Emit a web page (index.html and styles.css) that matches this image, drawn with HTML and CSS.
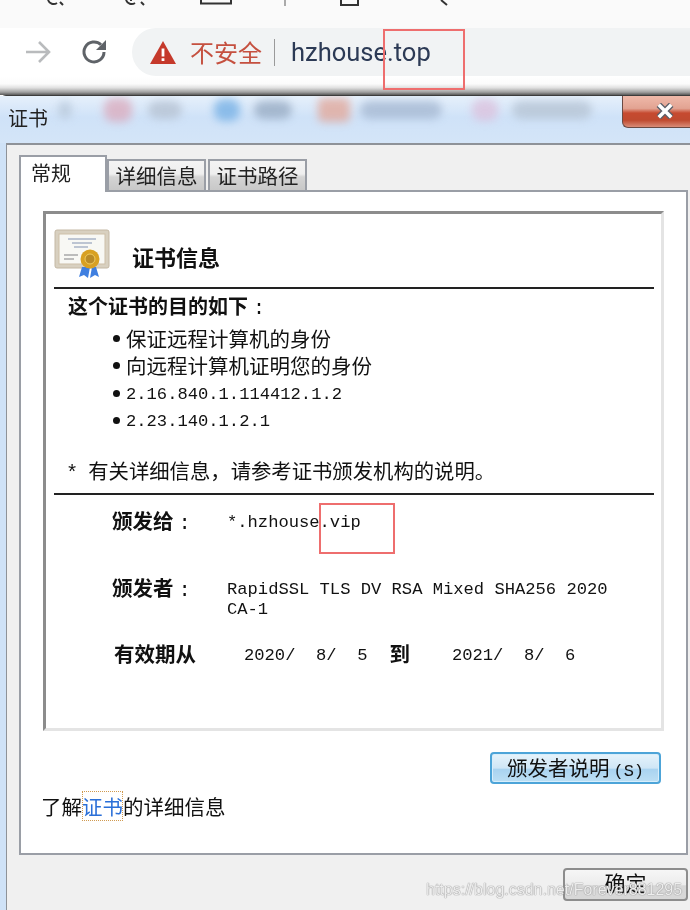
FILE: index.html
```html
<!DOCTYPE html>
<html lang="zh">
<head>
<meta charset="utf-8">
<title>证书</title>
<link rel="stylesheet" href="styles.css">
</head>
<body>
<div class="page">
  <div class="top-strip">
    <svg class="strip-icons" width="690" height="28" viewBox="0 0 690 28" fill="none" stroke="#333" stroke-width="2">
      <path d="M48 0a6 6 0 0 0 9 3M60 2l3 3"/>
      <path d="M126 0a6 6 0 0 0 9 3M141 2l3 3M130 0h2"/>
      <path d="M201 0v3.5h30V0"/>
      <path d="M285 0v6" stroke="#aaa"/>
      <path d="M341 0v5h17V0"/>
      <path d="M441 0l6 5"/>
    </svg>
  </div>
  <div class="toolbar">
    <svg class="nav-forward" width="26" height="26" viewBox="0 0 26 26" fill="none" stroke="#b9bbbd" stroke-width="2.6">
      <path d="M1 13h22M14 3l10 10-10 10"/>
    </svg>
    <svg class="nav-reload" width="28" height="28" viewBox="0 0 28 28" fill="none">
      <path d="M23 14a10 10 0 1 1-3-7.2" stroke="#5f6368" stroke-width="3"/>
      <path d="M25 2v10h-10z" fill="#5f6368"/>
    </svg>
    <div class="omnibox">
      <svg class="warn" width="26" height="23" viewBox="0 0 26 23">
        <path d="M13 0l13 23H0z" fill="#c5392b"/>
        <path d="M11.6 7.500h2.800v8h-2.800zM11.600 17.300h2.800v2.800h-2.800z" fill="#fff"/>
      </svg>
      <span class="insecure">不安全</span>
      <span class="omni-sep"></span>
      <span class="url">hzhouse.top</span>
    </div>
  </div>
  <div class="toolbar-shadow"></div>
  <div class="window">
    <div class="titlebar">
      <div class="blurred-tabs">
        <i class="blob b-gray1"></i><i class="blob b-pink"></i><i class="blob b-gray2"></i>
        <i class="blob b-blue"></i><i class="blob b-gray3"></i><i class="blob b-red"></i>
        <i class="blob b-gray4"></i><i class="blob b-pink2"></i><i class="blob b-gray5"></i>
      </div>
      <span class="title-text">证书</span>
      <div class="close-btn">
        <svg width="20" height="16" viewBox="0 0 22 18">
          <path d="M4 2l14 14M18 2L4 16" stroke="#5b5f68" stroke-width="7" fill="none"/>
          <path d="M4 2l14 14M18 2L4 16" stroke="#fff" stroke-width="4" fill="none"/>
        </svg>
      </div>
    </div>
    <div class="client">
      <div class="tabs">
        <div class="tab tab-active">常规</div>
        <div class="tab">详细信息</div>
        <div class="tab">证书路径</div>
      </div>
      <div class="panel">
        <div class="info-box">
          <div class="info-head">
            <svg class="cert-icon" width="56" height="50" viewBox="0 0 56 50">
              <rect x="1" y="1" width="54" height="38" rx="2" fill="#d8d0c0" stroke="#c4b8a4"/>
              <rect x="5" y="5" width="46" height="30" fill="#f8f8f4" stroke="#cdbfa8"/>
              <path d="M14 10h28M18 14h20M20 18h14" stroke="#a9b4c6" stroke-width="1.500"/>
              <path d="M10 26h14M10 30h10" stroke="#a8a8a8" stroke-width="1.500"/>
              <path d="M28 38l-3 10 5-2 4 3 2-11zM38 38l-2 11 5-3 4 2-3-10z" fill="#3f7fe0"/>
              <circle cx="36" cy="30" r="9.500" fill="#d8a022"/>
              <circle cx="36" cy="30" r="5" fill="#b98a26" stroke="#f0cc60"/>
            </svg>
            <h1 class="info-title">证书信息</h1>
          </div>
          <div class="rule"></div>
          <h2 class="purpose-title">这个证书的目的如下<span class="colon">:</span></h2>
          <ul class="purpose-list">
            <li>保证远程计算机的身份</li>
            <li>向远程计算机证明您的身份</li>
            <li class="mono">2.16.840.1.114412.1.2</li>
            <li class="mono">2.23.140.1.2.1</li>
          </ul>
          <p class="note"><span class="star">*</span>有关详细信息，请参考证书颁发机构的说明。</p>
          <div class="rule"></div>
          <div class="field field-to">
            <span class="label">颁发给<span class="colon">:</span></span>
            <span class="value">*.hzhouse.vip</span>
          </div>
          <div class="field field-by">
            <span class="label">颁发者<span class="colon">:</span></span>
            <span class="value">RapidSSL TLS DV RSA Mixed SHA256 2020<br>CA-1</span>
          </div>
          <div class="validity">
            <span class="label">有效期从</span>
            <span class="date date-from">2020/  8/  5</span>
            <span class="label to">到</span>
            <span class="date date-to">2021/  8/  6</span>
          </div>
        </div>
        <div class="actions">
          <button class="issuer-btn">颁发者说明<span class="mnemonic">(S)</span></button>
        </div>
        <p class="learn">了解<a class="learn-link">证书</a>的详细信息</p>
      </div>
      <div class="footer">
        <button class="ok-btn">确定</button>
      </div>
    </div>
  </div>
  <div class="mark mark-top"></div>
  <div class="mark mark-vip"></div>
  <div class="watermark">https://blog.csdn.net/Forever881295</div>
</div>
</body>
</html>
```
FILE: styles.css
```css
* { box-sizing: border-box; }
html, body { margin: 0; padding: 0; }
body {
  width: 690px;
  height: 910px;
  overflow: hidden;
  background: #fff;
  font-family: "Noto Sans CJK SC", "Liberation Sans", sans-serif;
  color: #111;
}
.page {
  position: relative;
  width: 690px;
  height: 910px;
  overflow: hidden;
  filter: blur(0.45px);
}
.top-strip { height: 28px; background: #fafafa; }
.strip-icons { display: block; }
.toolbar {
  height: 48px;
  display: flex;
  align-items: center;
  background: #fff;
  padding-left: 25px;
}
.nav-forward { margin-right: 30px; }
.nav-reload { margin-right: 23px; }
.omnibox {
  flex: 1;
  height: 48px;
  display: flex;
  align-items: center;
  background: #f1f3f4;
  border-radius: 24px 0 0 24px;
  padding-left: 18px;
}
.warn { margin-right: 14px; }
.insecure { font-size: 24px; color: #c5503f; width: 72px; white-space: nowrap; line-height: 48px; }
.omni-sep { width: 1px; height: 27px; background: #9a9a9a; margin: 0 16px 0 12px; }
.url { font-family: "Roboto", "Liberation Sans", sans-serif; font-size: 25.500px; color: #2c3a55; }
.toolbar-shadow {
  height: 19px;
  background: linear-gradient(#fff 0, #fbfbfb 42%, #e0e0e0 62%, #a0a0a0 85%, #5a5a5a 100%);
}
.window { height: 815px; display: flex; flex-direction: column; background: #cfe2f7; border-top: 1px solid #3c3c3c; border-top-left-radius: 6px; }
.titlebar {
  position: relative;
  height: 47px;
  flex: none;
  background: linear-gradient(#e6f0fb 0, #cfe2f8 45%, #d4e5f8 100%);
  padding: 7px 0 0 8px;
  overflow: hidden;
}
.title-text { position: relative; display: block; font-size: 20px; line-height: 30px; color: #222; }
.blurred-tabs {
  position: absolute;
  left: 58px;
  top: 2px;
  display: flex;
  align-items: center;
  height: 24px;
  filter: blur(4px);
  opacity: 0.75;
}
.blob { display: block; height: 18px; border-radius: 9px; flex: none; }
.b-gray1 { width: 14px; background: #b8c8da; margin-right: 32px; }
.b-pink { width: 28px; height: 24px; background: #dba9bb; margin-right: 16px; }
.b-gray2 { width: 34px; background: #b4c0d0; margin-right: 32px; }
.b-blue { width: 26px; height: 22px; background: #72aee4; margin-right: 14px; }
.b-gray3 { width: 38px; background: #94a8c0; margin-right: 26px; }
.b-red { width: 32px; height: 24px; border-radius: 5px; background: #e3a596; margin-right: 10px; }
.b-gray4 { width: 82px; background: #a3b6d0; margin-right: 30px; }
.b-pink2 { width: 26px; height: 22px; background: #dcc0dc; margin-right: 14px; }
.b-gray5 { width: 80px; background: #b4c2d2; }
.close-btn {
  position: absolute;
  right: 0;
  top: 0;
  width: 68px;
  height: 32px;
  display: flex;
  align-items: center;
  justify-content: center;
  padding: 0 0 2px 16px;
  border-left: 1px solid #6a4a44;
  border-bottom: 1px solid #6a4a44;
  border-bottom-left-radius: 6px;
  background: linear-gradient(#efb9aa 0, #e2a392 40%, #c64a30 55%, #bf4a30 78%, #d98c78 100%);
}
.client {
  flex: 1;
  margin-left: 6px;
  display: flex;
  flex-direction: column;
  background: #f0f0f0;
  border-top: 2px solid #8e9298;
  border-left: 1px solid #8e9298;
  padding: 10px 2px 0 12px;
}
.tabs { display: flex; align-items: flex-end; height: 35px; flex: none; position: relative; z-index: 1; }
.tab {
  width: 99px;
  height: 31px;
  margin-right: 2px;
  border: 2px solid #9a9ea6;
  border-bottom: none;
  background: linear-gradient(#f4f4f4 0, #eee 45%, #d4d4d4 55%, #c8c8c8 100%);
  font-size: 20.500px;
  line-height: 29px;
  text-align: center;
  white-space: nowrap;
  color: #222;
}
.tab-active {
  width: 88px;
  height: 37px;
  margin: 0 0 -2px 0;
  background: #fff;
  line-height: 31px;
  font-size: 20px;
  text-align: left;
  padding-left: 10px;
}
.panel {
  height: 665px;
  flex: none;
  background: #fff;
  border: 2px solid #9a9ea6;
  padding: 19px 22px 0 22px;
}
.info-box {
  height: 520px;
  border: 3px solid #e4e4e4;
  border-top-color: #8c8c8c;
  border-left-color: #8c8c8c;
  padding: 0 7px 0 8px;
  background: #fff;
}
.info-head { height: 73px; display: flex; align-items: flex-start; }
.cert-icon { margin: 15px 22px 0 0; flex: none; }
.info-title { margin: 25px 0 0; font-size: 22px; line-height: 34px; font-weight: 700; color: #111; }
.rule { height: 2px; background: #222; }
.purpose-title { margin: 1px 0 0 14px; height: 32px; font-size: 20px; line-height: 32px; font-weight: 700; }
.colon { font-family: "Liberation Mono", monospace; font-weight: 400; margin-left: 5px; }
.purpose-list { margin: 3px 0 0; padding: 0 0 0 59px; list-style: none; font-size: 20.500px; }
.purpose-list li { position: relative; height: 27.400px; line-height: 27.400px; padding-left: 13px; white-space: nowrap; }
.purpose-list li::before {
  content: "";
  position: absolute;
  left: 0;
  top: 10px;
  width: 7px;
  height: 7px;
  border-radius: 50%;
  background: #111;
}
.purpose-list .mono { font-family: "Liberation Mono", monospace; font-size: 17.150px; line-height: 29.400px; }
.note { margin: 21px 0 9px 12px; height: 28px; font-size: 20.350px; line-height: 28px; white-space: nowrap; }
.star { font-family: "Liberation Mono", monospace; margin-right: 10px; }
.field { display: flex; padding-left: 58px; }
.label { font-size: 20.500px; font-weight: 700; line-height: 28px; white-space: nowrap; }
.field .label { width: 115px; flex: none; }
.value { font-family: "Liberation Mono", monospace; font-size: 17.150px; line-height: 20px; padding-top: 7px; white-space: pre; }
.field-to { margin-top: 11px; height: 28px; }
.field-by { margin-top: 39px; height: 52px; }
.validity { display: flex; margin-top: 14px; padding-left: 60px; height: 28px; }
.date { font-family: "Liberation Mono", monospace; font-size: 17.150px; line-height: 28px; padding-top: 3px; white-space: pre; }
.date-from { margin-left: 48px; }
.to { margin-left: 22px; }
.date-to { margin-left: 42px; }
.actions { display: flex; justify-content: flex-end; padding-top: 21px; margin-right: 3px; }
.issuer-btn {
  width: 171px;
  height: 32px;
  padding: 0;
  border: 2px solid #4da4d8;
  border-radius: 4px;
  background: linear-gradient(#e6f3fb 0, #cfe6f6 50%, #a9d3f0 55%, #bcdff4 100%);
  font-family: inherit;
  font-size: 20.500px;
  line-height: 26px;
  color: #111;
  box-shadow: inset 0 0 0 1px #d8eefb;
}
.mnemonic { font-family: "Liberation Mono", monospace; font-size: 17px; margin-left: 4px; }
.learn { margin: 8px 0 0 -2px; font-size: 20.500px; line-height: 28px; white-space: nowrap; }
.learn-link {
  color: #2a6fd8;
  outline: 1px dotted #d09a50;
  outline-offset: -1px;
}
.footer { flex: 1; display: flex; justify-content: flex-end; padding-top: 13px; }
.ok-btn {
  width: 125px;
  height: 33px;
  padding: 0 0 4px;
  border: 2px solid #8d8d8d;
  border-radius: 4px;
  background: linear-gradient(#f6f6f6 0, #ececec 50%, #d6d6d6 55%, #d8d8d8 100%);
  font-family: inherit;
  font-size: 21px;
  line-height: 23px;
  color: #111;
}
.mark { position: absolute; border: 2px solid #ee6e6e; }
.mark-top { left: 383px; top: 29px; width: 82px; height: 61px; }
.mark-vip { left: 319px; top: 503px; width: 76px; height: 51px; }
.watermark {
  position: absolute;
  left: 426px;
  top: 879px;
  font-family: "Liberation Sans", sans-serif;
  font-size: 16px;
  line-height: 22px;
  color: rgba(255, 255, 255, 0.85);
  text-shadow: 0 0 1px #888, 0 0 1px #888;
  white-space: nowrap;
}
```
